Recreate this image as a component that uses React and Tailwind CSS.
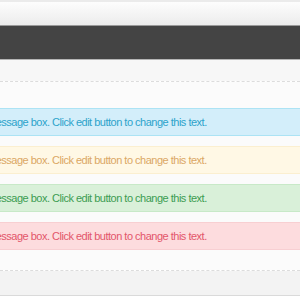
export default function App() {
  const msg = "This is a message box. Click edit button to change this text.";
  const boxes = [
    { cls: "bg-[#d3eefa] border-[#ace3f4] text-[#2ca3cb]" },
    { cls: "bg-[#fff8e5] border-[#fbefd0] text-[#dba764]" },
    { cls: "bg-[#d9f0d9] border-[#c8e9c8] text-[#3c9c52]" },
    { cls: "bg-[#fddcde] border-[#f8cfd2] text-[#e3566a]" },
  ];
  return (
    <div className="w-[300px] h-[300px] overflow-hidden bg-white font-['Liberation_Sans',Arial,sans-serif]">
      <div className="h-[2px] bg-[#ebebeb]" />
      <div className="h-[23px] bg-gradient-to-b from-[#fdfdfd] to-[#ececec]" />
      <div className="h-[1px] bg-[#9a9a9a]" />
      <div className="h-[33px] bg-[#444444]" />
      <div className="h-[1px] bg-[#b5b5b5]" />
      <div className="h-[21px] bg-[#f7f7f7]" />
      <div className="h-0 border-t border-dashed border-[#dcdcdc]" />
      <div className="bg-[#fbfbfb] pt-[26px] pb-[20px] flex flex-col gap-[10px]">
        {boxes.map((b, i) => (
          <div
            key={i}
            className={`h-[28px] border-y flex items-center overflow-hidden whitespace-nowrap text-[11px] tracking-[-0.5px] ${b.cls}`}
          >
            <span className="ml-[-52px]">{msg}</span>
          </div>
        ))}
      </div>
      <div className="h-0 border-t border-dashed border-[#dcdcdc]" />
      <div className="h-[24px] bg-[#f3f3f3]" />
      <div className="h-[1px] bg-[#dadada]" />
      <div className="h-[3px] bg-white" />
    </div>
  );
}
